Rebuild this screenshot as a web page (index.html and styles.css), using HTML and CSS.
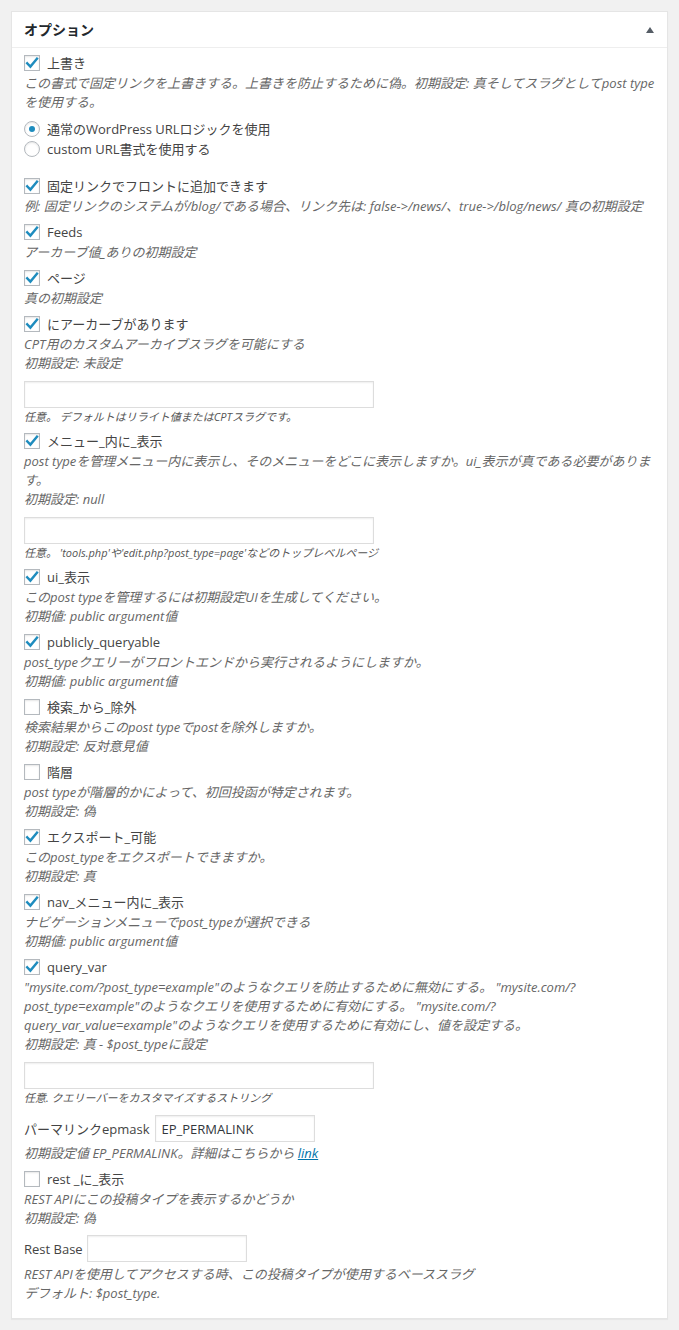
FILE: index.html
```html
<!DOCTYPE html>
<html lang="ja">
<head>
  <meta charset="UTF-8" />
  <meta name="viewport" content="width=device-width, initial-scale=1" />
  <title>オプション</title>
  <link rel="stylesheet" href="styles.css">
</head>
<body>
  <div class="postbox">
    <h2 class="hndle">
      <span>オプション</span>
      <span class="toggle-arrow"></span>
    </h2>

    <div class="inside">
      <div class="field">
        <label class="check"><span class="cb checked"><svg viewBox="0 0 16 16"><polyline points="3.2,8.2 6.4,11.6 13,3.6" /></svg></span>上書き</label>
        <p class="desc">この書式で固定リンクを上書きする。上書きを防止するために偽。初期設定: 真そしてスラグとしてpost typeを使用する。</p>
        <ul class="radios">
          <li><label class="check"><span class="rb checked"></span>通常のWordPress URLロジックを使用</label></li>
          <li><label class="check"><span class="rb"></span>custom URL書式を使用する</label></li>
        </ul>
      </div>

      <div class="field">
        <label class="check"><span class="cb checked"><svg viewBox="0 0 16 16"><polyline points="3.2,8.2 6.4,11.6 13,3.6" /></svg></span>固定リンクでフロントに追加できます</label>
        <p class="desc">例: 固定リンクのシステムが/blog/である場合、リンク先は: false-&gt;/news/、true-&gt;/blog/news/ 真の初期設定</p>
      </div>

      <div class="field">
        <label class="check"><span class="cb checked"><svg viewBox="0 0 16 16"><polyline points="3.2,8.2 6.4,11.6 13,3.6" /></svg></span>Feeds</label>
        <p class="desc">アーカーブ値_ありの初期設定</p>
      </div>

      <div class="field">
        <label class="check"><span class="cb checked"><svg viewBox="0 0 16 16"><polyline points="3.2,8.2 6.4,11.6 13,3.6" /></svg></span>ページ</label>
        <p class="desc">真の初期設定</p>
      </div>

      <div class="field">
        <label class="check"><span class="cb checked"><svg viewBox="0 0 16 16"><polyline points="3.2,8.2 6.4,11.6 13,3.6" /></svg></span>にアーカーブがあります</label>
        <p class="desc">CPT用のカスタムアーカイブスラグを可能にする</p>
        <p class="desc">初期設定: 未設定</p>
        <input type="text" class="text-wide" />
        <p class="note">任意。 デフォルトはリライト値またはCPTスラグです。</p>
      </div>

      <div class="field">
        <label class="check"><span class="cb checked"><svg viewBox="0 0 16 16"><polyline points="3.2,8.2 6.4,11.6 13,3.6" /></svg></span>メニュー_内に_表示</label>
        <p class="desc">post typeを管理メニュー内に表示し、そのメニューをどこに表示しますか。ui_表示が真である必要があります。</p>
        <p class="desc">初期設定: null</p>
        <input type="text" class="text-wide" />
        <p class="note">任意。 'tools.php'や'edit.php?post_type=page'などのトップレベルページ</p>
      </div>

      <div class="field">
        <label class="check"><span class="cb checked"><svg viewBox="0 0 16 16"><polyline points="3.2,8.2 6.4,11.6 13,3.6" /></svg></span>ui_表示</label>
        <p class="desc">このpost typeを管理するには初期設定UIを生成してください。</p>
        <p class="desc">初期値: public argument値</p>
      </div>

      <div class="field">
        <label class="check"><span class="cb checked"><svg viewBox="0 0 16 16"><polyline points="3.2,8.2 6.4,11.6 13,3.6" /></svg></span>publicly_queryable</label>
        <p class="desc">post_typeクエリーがフロントエンドから実行されるようにしますか。</p>
        <p class="desc">初期値: public argument値</p>
      </div>

      <div class="field">
        <label class="check"><span class="cb"></span>検索_から_除外</label>
        <p class="desc">検索結果からこのpost typeでpostを除外しますか。</p>
        <p class="desc">初期設定: 反対意見値</p>
      </div>

      <div class="field">
        <label class="check"><span class="cb"></span>階層</label>
        <p class="desc">post typeが階層的かによって、初回投函が特定されます。</p>
        <p class="desc">初期設定: 偽</p>
      </div>

      <div class="field">
        <label class="check"><span class="cb checked"><svg viewBox="0 0 16 16"><polyline points="3.2,8.2 6.4,11.6 13,3.6" /></svg></span>エクスポート_可能</label>
        <p class="desc">このpost_typeをエクスポートできますか。</p>
        <p class="desc">初期設定: 真</p>
      </div>

      <div class="field">
        <label class="check"><span class="cb checked"><svg viewBox="0 0 16 16"><polyline points="3.2,8.2 6.4,11.6 13,3.6" /></svg></span>nav_メニュー内に_表示</label>
        <p class="desc">ナビゲーションメニューでpost_typeが選択できる</p>
        <p class="desc">初期値: public argument値</p>
      </div>

      <div class="field">
        <label class="check"><span class="cb checked"><svg viewBox="0 0 16 16"><polyline points="3.2,8.2 6.4,11.6 13,3.6" /></svg></span>query_var</label>
        <p class="desc">"mysite.com/?post_type=example"のようなクエリを防止するために無効にする。 "mysite.com/?<wbr>post_type=example"のようなクエリを使用するために有効にする。 "mysite.com/?<wbr>query_var_value=example"のようなクエリを使用するために有効にし、値を設定する。</p>
        <p class="desc">初期設定: 真 - $post_typeに設定</p>
        <input type="text" class="text-wide" />
        <p class="note">任意. クエリーバーをカスタマイズするストリング</p>
      </div>

      <div class="inline-row">
        <label for="epmask">パーマリンクepmask</label>
        <input type="text" id="epmask" class="text-short" value="EP_PERMALINK" />
      </div>
      <p class="desc">初期設定値 EP_PERMALINK。詳細はこちらから <a href="#">link</a></p>

      <div class="field">
        <label class="check"><span class="cb"></span>rest _に_表示</label>
        <p class="desc">REST APIにこの投稿タイプを表示するかどうか</p>
        <p class="desc">初期設定: 偽</p>
      </div>

      <div class="inline-row rest">
        <label for="rest-base">Rest Base</label>
        <input type="text" id="rest-base" class="text-short" />
      </div>
      <p class="desc">REST APIを使用してアクセスする時、この投稿タイプが使用するベーススラグ</p>
      <p class="desc">デフォルト: $post_type.</p>
    </div>
  </div>
</body>
</html>
```

FILE: styles.css
```css
body {
  margin: 0;
  padding: 11px;
  background: #f1f1f1;
  color: #444;
  font-family: "Open Sans", "Noto Sans CJK JP", sans-serif;
  font-size: 13px;
}
.postbox {
  background: #fff;
  border: 1px solid #e5e5e5;
  box-shadow: 0 1px 1px rgba(0,0,0,0.04);
}
.hndle {
  display: flex;
  justify-content: space-between;
  align-items: center;
  margin: 0;
  padding: 8px 12px;
  font-size: 14px;
  line-height: 19px;
  font-weight: bold;
  color: #23282d;
  border-bottom: 1px solid #eee;
}
.toggle-arrow {
  width: 0;
  height: 0;
  margin-right: 1px;
  border-left: 4px solid transparent;
  border-right: 4px solid transparent;
  border-bottom: 6px solid #555d66;
}
.inside {
  padding: 4px 12px 15px;
}
.field + .field {
  margin-top: 5px;
}
.check {
  display: flex;
  align-items: center;
  height: 22px;
  line-height: 22px;
  color: #444;
}
.cb, .rb {
  flex: none;
  box-sizing: border-box;
  width: 16px;
  height: 16px;
  margin-right: 7px;
  border: 1px solid #b4b9be;
  background: #fff;
  box-shadow: inset 0 1px 2px rgba(0,0,0,0.1);
}
.cb svg {
  display: block;
  width: 16px;
  height: 16px;
  margin: -1px;
}
.cb polyline {
  fill: none;
  stroke: #1e8cbe;
  stroke-width: 2.4;
  stroke-linecap: square;
}
.rb {
  border-radius: 50%;
  display: flex;
  align-items: center;
  justify-content: center;
}
.rb.checked::before {
  content: "";
  width: 6px;
  height: 6px;
  border-radius: 50%;
  background: #1e8cbe;
}
.radios {
  list-style: none;
  margin: 7px 0 16px;
  padding: 0;
}
.radios .check {
  height: 20px;
  line-height: 20px;
}
.desc {
  margin: 0;
  font-style: italic;
  line-height: 19px;
  color: #666;
}
.note {
  margin: 0;
  font-size: 11px;
  font-style: italic;
  line-height: 17px;
  color: #555;
}
input[type="text"] {
  box-sizing: border-box;
  height: 27px;
  padding: 3px 6px;
  border: 1px solid #ddd;
  box-shadow: inset 0 1px 2px rgba(0,0,0,0.07);
  font-family: inherit;
  font-size: 13px;
  color: #32373c;
  outline: none;
}
.text-wide {
  display: block;
  width: 350px;
  margin-top: 8px;
}
.text-short {
  width: 160px;
}
.inline-row {
  display: flex;
  align-items: center;
  gap: 5px;
  margin: 9px 0 2px;
}
.inline-row.rest {
  gap: 4px;
  margin: 7px 0 3px;
}
.inline-row + .desc + .field {
  margin-top: 5px;
}
a {
  color: #0073aa;
}
```
